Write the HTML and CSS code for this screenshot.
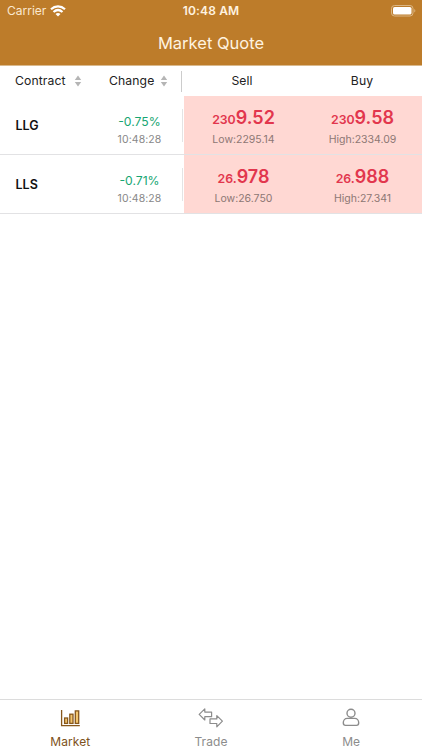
FILE: index.html
```html
<!DOCTYPE html>
<html lang="en">

<head>
    <meta charset="UTF-8" />
    <meta name="viewport" content="width=device-width, initial-scale=1.0" />
    <title>Market Quote</title>
    <link rel="stylesheet" href="styles.css">
</head>

<body>
    <header class="header">
        <div class="status-bar">
            <div class="carrier">
                <span>Carrier</span>
                <svg class="wifi" width="16" height="12" viewBox="0 0 16 12" fill="none" stroke="#fff" stroke-width="2.2">
                    <path d="M1 4.3C5 .5 11 .5 15 4.3" />
                    <path d="M3.5 7C6.2 4.6 9.8 4.6 12.5 7" />
                    <path d="M5.5 8.9C7 7.7 9 7.7 10.5 8.9L8 11.5Z" fill="#fff" stroke="none" />
                </svg>
            </div>
            <span class="clock">10:48 AM</span>
            <svg class="battery" width="25" height="12" viewBox="0 0 25 12">
                <rect x=".5" y=".5" width="21.5" height="10.5" rx="3" fill="none" stroke="#dcb683" />
                <rect x="2" y="2" width="18.5" height="7.5" rx="1.6" fill="#fff" />
                <path d="M23.3 4v3.6c1.4-.6 1.4-3 0-3.6z" fill="#dcb683" />
            </svg>
        </div>
        <h1 class="title">Market Quote</h1>
    </header>

    <main class="quotes">
        <div class="row table-head">
            <div class="col-contract">
                <span>Contract</span>
                <svg class="sort" width="8" height="12" viewBox="0 0 8 12" fill="#b5b5b5">
                    <path d="M4 .5L7.2 5H.8zM4 11.5L.8 7h6.4z" />
                </svg>
            </div>
            <div class="col-change">
                <span>Change</span>
                <svg class="sort" width="8" height="12" viewBox="0 0 8 12" fill="#b5b5b5">
                    <path d="M4 .5L7.2 5H.8zM4 11.5L.8 7h6.4z" />
                </svg>
            </div>
            <div class="col-price">Sell</div>
            <div class="col-price">Buy</div>
        </div>

        <div class="row quote">
            <div class="col-contract"><span class="symbol">LLG</span></div>
            <div class="col-change">
                <span class="change">-0.75%</span>
                <span class="time">10:48:28</span>
            </div>
            <div class="col-price">
                <span class="price"><small>230</small>9.52</span>
                <span class="limit">Low:2295.14</span>
            </div>
            <div class="col-price">
                <span class="price"><small>230</small>9.58</span>
                <span class="limit">High:2334.09</span>
            </div>
        </div>

        <div class="row quote">
            <div class="col-contract"><span class="symbol">LLS</span></div>
            <div class="col-change">
                <span class="change">-0.71%</span>
                <span class="time">10:48:28</span>
            </div>
            <div class="col-price">
                <span class="price"><small>26.</small>978</span>
                <span class="limit">Low:26.750</span>
            </div>
            <div class="col-price">
                <span class="price"><small>26.</small>988</span>
                <span class="limit">High:27.341</span>
            </div>
        </div>
    </main>

    <nav class="tab-bar">
        <a class="tab active">
            <svg width="20" height="18" viewBox="0 0 20 18" fill="none" stroke="#87571b" stroke-width="1.3">
                <path d="M1.6 1v15.7h18.2" />
                <g fill="#f2c66f">
                    <rect x="4.6" y="9" width="3" height="5.4" />
                    <rect x="9.8" y="5.2" width="3.2" height="9.2" />
                    <rect x="15.3" y="1.9" width="3.4" height="12.5" />
                </g>
            </svg>
            <span>Market</span>
        </a>
        <a class="tab">
            <svg width="26" height="20" viewBox="0 0 26 20" fill="none" stroke="#8c8c8c" stroke-width="1.2" stroke-linejoin="round">
                <path d="M1.2 6.4L6.8 .8v3.3h6.8v4.6H6.8V12z" />
                <path d="M24.4 13.2L18.8 7.6v3.3H12v4.6h6.8v3.3z" />
            </svg>
            <span>Trade</span>
        </a>
        <a class="tab">
            <svg width="18" height="19" viewBox="0 0 18 19" fill="none" stroke="#8c8c8c" stroke-width="1.4">
                <circle cx="9" cy="5.3" r="4" />
                <path d="M5.2 10.4h7.6c2.2 0 3.9 1.9 3.9 4.4 0 1.8-.7 2.6-2.2 2.6h-11c-1.5 0-2.2-.8-2.2-2.6 0-2.5 1.7-4.4 3.9-4.4z" />
            </svg>
            <span>Me</span>
        </a>
    </nav>
</body>

</html>
```

FILE: styles.css
```css
* {
    box-sizing: border-box;
}

body {
    margin: 0;
    height: 100vh;
    display: flex;
    flex-direction: column;
    overflow: hidden;
    font-family: Inter, "Liberation Sans", sans-serif;
    background-color: #fff;
    color: #222;
}

.header {
    height: 66px;
    background-color: #bd7c2a;
    border-bottom: 1px solid #d9b98d;
    color: #fff;
}

.status-bar {
    display: grid;
    grid-template-columns: 1fr auto 1fr;
    align-items: center;
    height: 21px;
    padding: 0 7px;
    font-size: 12px;
}

.carrier {
    display: flex;
    align-items: center;
    gap: 4px;
    color: #fbe8cf;
}

.clock {
    font-weight: 600;
    letter-spacing: 0.15px;
    color: #fff3e0;
}

.battery {
    justify-self: end;
    margin-right: -1px;
}

.title {
    margin: 0;
    font-size: 16.5px;
    line-height: 44px;
    font-weight: 400;
    text-align: center;
    color: #fff3e0;
}

.quotes {
    flex: 1;
}

.row {
    display: grid;
    grid-template-columns: 95px 89px 1fr 1fr;
}

.table-head {
    height: 30px;
    align-items: center;
    font-size: 12.2px;
    letter-spacing: 0.1px;
}

.table-head .col-contract,
.table-head .col-change {
    display: flex;
    align-items: center;
    justify-content: space-between;
}

.table-head .col-contract {
    padding: 0 13px 0 15px;
}

.table-head .col-change {
    height: 21px;
    margin-right: 2px;
    padding: 0 13px 0 14px;
    border-right: 1px solid #ccc;
}

.table-head span,
.table-head .col-price {
    padding-bottom: 1px;
}

.table-head .col-price {
    padding-right: 3px;
}

.table-head .col-price:last-child {
    padding-right: 1px;
}

.quote {
    height: 59px;
    grid-template-rows: 58px;
    border-bottom: 1px solid #e2e2e4;
}

.quote .col-contract {
    display: flex;
    align-items: center;
    padding: 1px 0 0 15.5px;
}

.symbol {
    font-size: 12.5px;
    font-weight: 600;
    color: #111;
}

.quote .col-change {
    display: flex;
    flex-direction: column;
    align-items: center;
    margin: 13px 1px 12px 0;
    border-right: 1px solid #e4e4e4;
    padding: 4px 0 0 2px;
}

.change {
    font-size: 12.2px;
    line-height: 17px;
    color: #17a673;
}

.time {
    font-size: 10.5px;
    line-height: 19px;
    letter-spacing: 0.1px;
    color: #888;
}

.col-price {
    text-align: center;
}

.quote .col-price {
    display: flex;
    flex-direction: column;
    align-items: center;
    padding-top: 9px;
    background-color: #ffd8d3;
}

.price {
    font-size: 18px;
    line-height: 26px;
    font-weight: 600;
    color: #e2364d;
}

.price small {
    font-size: 12.3px;
    font-weight: 600;
}

.limit {
    font-size: 10.5px;
    line-height: 13px;
    color: #8d7773;
}

.tab-bar {
    display: grid;
    grid-template-columns: repeat(3, 1fr);
    height: 51px;
    border-top: 1px solid #dcdcdc;
}

.tab {
    display: grid;
    grid-template-rows: 35px 13px;
    place-items: center;
    align-content: start;
    font-size: 12px;
    letter-spacing: 0.1px;
    color: #8c8c8c;
}

.tab:last-child {
    padding-right: 1px;
}

.tab.active {
    color: #7d5220;
}
```
